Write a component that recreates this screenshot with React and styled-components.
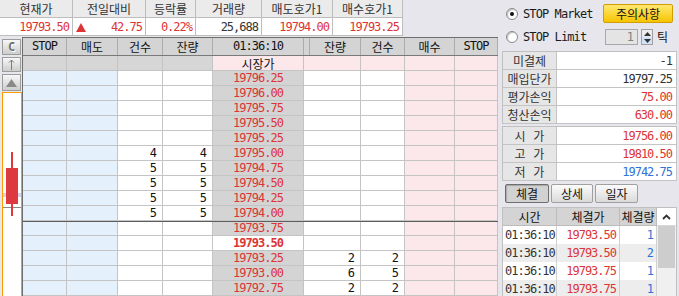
import React from "react";
import styled, { createGlobalStyle, css } from "styled-components";

const KR = `"Noto Sans CJK KR", "Noto Sans", sans-serif`;
const MONO = `"DejaVu Sans Mono", "Noto Sans CJK KR", monospace`;
const RED = "#dc3535";
const BLUE = "#2f72d8";
const DARK = "#333";

const GlobalStyle = createGlobalStyle`
  html, body { margin: 0; padding: 0; }
  body {
    background: #e6e6ec;
    font-family: ${KR};
    font-size: 12px;
    line-height: 14px;
    color: #222;
  }
  * { box-sizing: border-box; }
`;

const num = css`
  font-family: ${MONO};
  letter-spacing: -1px;
`;

// column widths of the order book (sum 475 + left border)
const COLS = "44px 51px 45px 50px 91px 6px 51px 44px 50px 43px";
const COL_BG = ["#e4f0fc", "#e4f0fc", "#fff", "#fff", "#d4d4d4", "#fff", "#fff", "#fff", "#fce8ea", "#fce8ea"];

const quoteHeads = ["현재가", "전일대비", "등락률", "거래량", "매도호가1", "매수호가1"];
const quoteValues = [
  { v: "19793.50", c: RED },
  { v: "42.75", c: RED, up: true },
  { v: "0.22%", c: RED },
  { v: "25,688", c: DARK },
  { v: "19794.00", c: RED },
  { v: "19793.25", c: RED },
];

const book = [
  { price: "시장가", market: true },
  { price: "19796.25" },
  { price: "19796.00" },
  { price: "19795.75" },
  { price: "19795.50" },
  { price: "19795.25" },
  { price: "19795.00", askCnt: 4, askQty: 4 },
  { price: "19794.75", askCnt: 5, askQty: 5 },
  { price: "19794.50", askCnt: 5, askQty: 5 },
  { price: "19794.25", askCnt: 5, askQty: 5 },
  { price: "19794.00", askCnt: 5, askQty: 5 },
  { price: "19793.75", divider: true },
  { price: "19793.50", current: true },
  { price: "19793.25", bidQty: 2, bidCnt: 2 },
  { price: "19793.00", bidQty: 6, bidCnt: 5 },
  { price: "19792.75", bidQty: 2, bidCnt: 2 },
];

const info1 = [
  { label: "미결제", value: "-1", color: DARK },
  { label: "매입단가", value: "19797.25", color: DARK },
  { label: "평가손익", value: "75.00", color: RED },
  { label: "청산손익", value: "630.00", color: RED },
];
const info2 = [
  { label: "시 가", value: "19756.00", color: RED },
  { label: "고 가", value: "19810.50", color: RED },
  { label: "저 가", value: "19742.75", color: BLUE },
];

const trades = [
  { time: "01:36:10", price: "19793.50", qty: "1" },
  { time: "01:36:10", price: "19793.50", qty: "2" },
  { time: "01:36:10", price: "19793.75", qty: "1" },
  { time: "01:36:10", price: "19793.75", qty: "1" },
];

const Screen = styled.div`
  display: flex;
  width: 679px;
  height: 296px;
  overflow: hidden;
  background: #e6e6ec;
`;

const Main = styled.div`
  width: 498px;
  display: flex;
  flex-direction: column;
`;

const QuoteGrid = styled.div`
  display: grid;
  grid-template-columns: 73px 73px 50px 66px 71px 70px;
  grid-template-rows: 18px 18px;
  width: 403px;
  margin-bottom: 1px;
  flex-shrink: 0;
`;

const QuoteHead = styled.div`
  display: flex;
  align-items: center;
  justify-content: center;
  background: #ebebeb;
  border-right: 1px solid #bdbdbd;
  border-bottom: 1px solid #bdbdbd;
  color: ${DARK};
`;

const QuoteValue = styled.div`
  display: flex;
  align-items: center;
  justify-content: flex-end;
  padding: 0 3px;
  background: #fff;
  border-right: 1px solid #bdbdbd;
  border-bottom: 1px solid #bdbdbd;
  color: ${(p) => p.$color};
  ${num}
`;

const UpMark = styled.span`
  margin-right: auto;
  width: 0;
  height: 0;
  border-left: 5.5px solid transparent;
  border-right: 5.5px solid transparent;
  border-bottom: 9px solid ${RED};
  margin-top: 1px;
`;

const BookArea = styled.div`
  flex: 1;
  display: flex;
  min-height: 0;
`;

const SideStrip = styled.div`
  width: 22px;
  display: flex;
  flex-direction: column;
  padding: 2px 0 0 2px;
`;

const StripButton = styled.div`
  width: 19px;
  height: ${(p) => p.$h}px;
  margin-bottom: ${(p) => p.$mb}px;
  flex-shrink: 0;
  display: flex;
  align-items: center;
  justify-content: center;
  background: linear-gradient(#f7f7f7, #cdcdcd);
  border: 1px solid #9c9c9c;
  color: #707070;
  font: bold 12px ${MONO};
  text-shadow: 1px 1px 0 #fff;
`;

const ChartBox = styled.div`
  flex: 1;
  width: 20px;
  position: relative;
  background: #fff;
  border: 1px solid #ff9c00;
  border-bottom: none;
`;

const CandleSvg = styled.svg`
  position: absolute;
  left: 0;
  top: 0;
`;

const Book = styled.div`
  width: 476px;
  display: flex;
  flex-direction: column;
  border-top: 1px solid #6e6e6e;
  border-left: 1px solid #6e6e6e;
`;

const BookRow = styled.div`
  display: grid;
  grid-template-columns: ${COLS};
  grid-template-rows: minmax(0, 1fr);
  flex-shrink: 0;
  overflow: hidden;
  height: ${(p) => (p.$head ? 18 : 15)}px;
  border-top: ${(p) => (p.$divider ? "1px solid #5e5e5e" : "none")};
  border-bottom: ${(p) => (p.$head ? "1px solid #7a7a7a" : "none")};
`;

const HeadCell = styled.div`
  display: flex;
  align-items: center;
  justify-content: center;
  line-height: 13px;
  background: #d4d4d4;
  border-right: 1px solid #acacac;
  color: #111;
  ${(p) => p.$num && num}
`;

const Cell = styled.div`
  display: flex;
  align-items: center;
  justify-content: ${(p) => (p.$center ? "center" : "flex-end")};
  padding-right: ${(p) => (p.$center ? 0 : 6)}px;
  line-height: 13px;
  background: ${(p) => p.$bg};
  border-right: 1px solid #c4c4c4;
  border-bottom: 1px solid #c4c4c4;
  color: ${(p) => p.$color || "#111"};
  font-weight: ${(p) => (p.$bold ? 700 : 400)};
  ${(p) => (p.$kr ? `font-family: ${KR};` : num)}
`;

const Panel = styled.div`
  flex: 1;
  display: flex;
  flex-direction: column;
  padding-left: 4px;
`;

const OptionRow = styled.div`
  display: flex;
  align-items: center;
  flex-shrink: 0;
  height: ${(p) => p.$h}px;
  margin-top: ${(p) => p.$mt}px;
  padding-left: 4px;
`;

const RadioOption = styled.label`
  display: flex;
  align-items: center;
  gap: 5px;
  width: ${(p) => p.$w}px;
  color: #1a1a1a;
  ${num}
  letter-spacing: -0.9px;
`;

const Radio = styled.span`
  width: 12px;
  height: 12px;
  border-radius: 50%;
  background: #fff;
  border: 1px solid #8a8a8a;
  box-shadow: inset 1px 1px 1px rgba(0, 0, 0, 0.25);
  display: flex;
  align-items: center;
  justify-content: center;
  &::after {
    content: "";
    width: 4px;
    height: 4px;
    border-radius: 50%;
    background: ${(p) => (p.$on ? "#111" : "transparent")};
  }
`;

const NoticeButton = styled.button`
  width: 70px;
  height: 19px;
  padding: 0;
  border: 1px solid #d49e00;
  border-radius: 2px;
  background: linear-gradient(#ffe870, #f6c400);
  font: 12px ${KR};
  color: #111;
  display: flex;
  align-items: center;
  justify-content: center;
`;

const SpinBox = styled.div`
  width: 33px;
  height: 16px;
  display: flex;
  align-items: center;
  justify-content: flex-end;
  padding-right: 4px;
  background: #e4e4e4;
  border: 1px solid #a8a8a8;
  color: #808080;
  ${num}
`;

const SpinButtons = styled.div`
  width: 12px;
  height: 16px;
  margin-left: 3px;
  display: flex;
  flex-direction: column;
  border: 1px solid #a0a0a0;
`;

const SpinHalf = styled.div`
  flex: 1;
  display: flex;
  align-items: center;
  justify-content: center;
  background: ${(p) => p.$bg};
`;

const Unit = styled.span`
  margin-left: 4px;
  font-size: 12px;
  color: #111;
`;

const InfoTable = styled.div`
  display: grid;
  grid-template-columns: 54px 1fr;
  grid-auto-rows: 18px;
  width: 175px;
  flex-shrink: 0;
  margin-top: ${(p) => p.$mt}px;
  border-top: 1px solid #c0c0c0;
  border-left: 1px solid #c0c0c0;
`;

const InfoLabel = styled.div`
  display: flex;
  align-items: center;
  justify-content: center;
  background: #e6e6e6;
  border-right: 1px solid #c4c4c4;
  border-bottom: 1px solid #c4c4c4;
  color: ${DARK};
  word-spacing: 5px;
`;

const InfoValue = styled.div`
  display: flex;
  align-items: center;
  justify-content: flex-end;
  padding-right: 4px;
  background: #fff;
  border-right: 1px solid #c4c4c4;
  border-bottom: 1px solid #c4c4c4;
  color: ${(p) => p.$color};
  ${num}
`;

const TabBar = styled.div`
  display: flex;
  gap: 2px;
  margin-top: 3px;
  padding-left: 3px;
  flex-shrink: 0;
`;

const Tab = styled.button`
  width: ${(p) => p.$w}px;
  height: 19px;
  padding: 0;
  font: 12px ${KR};
  color: #111;
  border-radius: 2px;
  border: 1px solid ${(p) => (p.$active ? "#6e6e6e" : "#a0a0a0")};
  background: ${(p) => (p.$active ? "#d2d2d2" : "linear-gradient(#fbfbfb, #dadada)")};
  box-shadow: ${(p) => (p.$active ? "inset 1px 1px 1px rgba(0,0,0,0.2)" : "none")};
  display: flex;
  align-items: center;
  justify-content: center;
`;

const TradeBox = styled.div`
  display: flex;
  width: 175px;
  margin-top: 4px;
  flex: 1;
  min-height: 0;
  border-left: 1px solid #c0c0c0;
  border-top: 1px solid #c0c0c0;
`;

const TradeGrid = styled.div`
  display: grid;
  grid-template-columns: 54px 63px 37px;
  grid-auto-rows: 18px;
  width: 154px;
  align-content: start;
`;

const TradeHead = styled.div`
  display: flex;
  align-items: center;
  justify-content: center;
  background: #d4d4d4;
  border-right: 1px solid #bcbcbc;
  border-bottom: 1px solid #bcbcbc;
  color: #111;
`;

const TradeCell = styled.div`
  display: flex;
  align-items: center;
  justify-content: ${(p) => (p.$left ? "flex-start" : "flex-end")};
  padding: 0 ${(p) => (p.$left ? 0 : 3)}px 0 ${(p) => (p.$left ? 2 : 0)}px;
  background: ${(p) => (p.$odd ? "#ededed" : "#fff")};
  border-right: 1px solid #d0d0d0;
  color: ${(p) => p.$color};
  ${num}
`;

const ScrollBar = styled.div`
  width: 20px;
  display: flex;
  flex-direction: column;
  background: #f0f0f0;
  border-right: 1px solid #c0c0c0;
`;

const ScrollUp = styled.div`
  height: 18px;
  display: flex;
  align-items: center;
  justify-content: center;
  background: #fff;
  border-bottom: 1px solid #d8d8d8;
`;

const ScrollThumb = styled.div`
  height: 42px;
  margin: 0 1px;
  background: #cdcdcd;
`;

function Candle() {
  return (
    <CandleSvg width="18" height="210" viewBox="0 0 18 210">
      <rect x="0" y="100" width="18" height="4" fill="#d8d2ea" />
      <rect x="0" y="114" width="18" height="1" fill="#8a8a8a" />
      <rect x="8" y="59" width="2" height="64" fill="#dc3a3e" />
      <rect x="3" y="75" width="12" height="36" fill="#dc3a3e" />
    </CandleSvg>
  );
}

function OrderBook() {
  const heads = ["STOP", "매도", "건수", "잔량", "01:36:10", "", "잔량", "건수", "매수", "STOP"];
  return (
    <Book>
      <BookRow $head>
        {heads.map((h, i) => (
          <HeadCell key={i} $num={/^[0-9A-Z:]+$/.test(h)}>
            {h}
          </HeadCell>
        ))}
      </BookRow>
      {book.map((r, i) => {
        const bg = (c) => {
          if (r.market) return c < 4 ? "#d6d6d6" : "#fce8ea";
          if (r.current && c === 4) return "#fff";
          return COL_BG[c];
        };
        return (
          <BookRow key={i} $divider={r.divider}>
            <Cell $bg={bg(0)} />
            <Cell $bg={bg(1)} />
            <Cell $bg={bg(2)}>{r.askCnt}</Cell>
            <Cell $bg={bg(3)}>{r.askQty}</Cell>
            <Cell
              $bg={bg(4)}
              $center
              $kr={r.market}
              $bold={r.current}
              $color={r.market ? "#111" : RED}
            >
              {r.price}
            </Cell>
            <Cell $bg={bg(5)} />
            <Cell $bg={bg(6)}>{r.bidQty}</Cell>
            <Cell $bg={bg(7)}>{r.bidCnt}</Cell>
            <Cell $bg={bg(8)} />
            <Cell $bg={bg(9)} />
          </BookRow>
        );
      })}
    </Book>
  );
}

export default function App() {
  return (
    <>
      <GlobalStyle />
      <Screen>
        <Main>
          <QuoteGrid>
            {quoteHeads.map((h) => (
              <QuoteHead key={h}>{h}</QuoteHead>
            ))}
            {quoteValues.map((q, i) => (
              <QuoteValue key={i} $color={q.c}>
                {q.up && <UpMark />}
                {q.v}
              </QuoteValue>
            ))}
          </QuoteGrid>
          <BookArea>
            <SideStrip>
              <StripButton $h={16} $mb={2}>C</StripButton>
              <StripButton $h={15} $mb={2}>
                <svg width="7" height="11" viewBox="0 0 7 11">
                  <path d="M3.5 1V11M1 3.5L3.5 1L6 3.5" stroke="#7a7a7a" fill="none" />
                </svg>
              </StripButton>
              <StripButton $h={17} $mb={1}>
                <svg width="11" height="8" viewBox="0 0 11 8">
                  <path d="M5.5 0L11 8H0Z" fill="#8a8a8a" />
                </svg>
              </StripButton>
              <ChartBox>
                <Candle />
              </ChartBox>
            </SideStrip>
            <OrderBook />
          </BookArea>
        </Main>

        <Panel>
          <OptionRow $h={19} $mt={4}>
            <RadioOption $w={97}>
              <Radio $on />
              STOP Market
            </RadioOption>
            <NoticeButton>주의사항</NoticeButton>
          </OptionRow>
          <OptionRow $h={16} $mt={6}>
            <RadioOption $w={99}>
              <Radio />
              STOP Limit
            </RadioOption>
            <SpinBox>1</SpinBox>
            <SpinButtons>
              <SpinHalf $bg="#ececec">
                <svg width="7" height="4" viewBox="0 0 7 4">
                  <path d="M3.5 0L7 4H0Z" fill="#333" />
                </svg>
              </SpinHalf>
              <SpinHalf $bg="#cfe2f6">
                <svg width="7" height="4" viewBox="0 0 7 4">
                  <path d="M0 0H7L3.5 4Z" fill="#333" />
                </svg>
              </SpinHalf>
            </SpinButtons>
            <Unit>틱</Unit>
          </OptionRow>

          <InfoTable $mt={6}>
            {info1.map((r) => (
              <React.Fragment key={r.label}>
                <InfoLabel>{r.label}</InfoLabel>
                <InfoValue $color={r.color}>{r.value}</InfoValue>
              </React.Fragment>
            ))}
          </InfoTable>
          <InfoTable $mt={2}>
            {info2.map((r) => (
              <React.Fragment key={r.label}>
                <InfoLabel>{r.label}</InfoLabel>
                <InfoValue $color={r.color}>{r.value}</InfoValue>
              </React.Fragment>
            ))}
          </InfoTable>

          <TabBar>
            <Tab $w={44} $active>체결</Tab>
            <Tab $w={42}>상세</Tab>
            <Tab $w={43}>일자</Tab>
          </TabBar>

          <TradeBox>
            <TradeGrid>
              <TradeHead>시간</TradeHead>
              <TradeHead>체결가</TradeHead>
              <TradeHead>체결량</TradeHead>
              {trades.map((t, i) => (
                <React.Fragment key={i}>
                  <TradeCell $left $odd={i % 2 === 1} $color={DARK}>{t.time}</TradeCell>
                  <TradeCell $odd={i % 2 === 1} $color={RED}>{t.price}</TradeCell>
                  <TradeCell $odd={i % 2 === 1} $color={BLUE}>{t.qty}</TradeCell>
                </React.Fragment>
              ))}
            </TradeGrid>
            <ScrollBar>
              <ScrollUp>
                <svg width="9" height="6" viewBox="0 0 9 6">
                  <path d="M1 5L4.5 1.5L8 5" stroke="#333" strokeWidth="1.8" fill="none" />
                </svg>
              </ScrollUp>
              <ScrollThumb />
            </ScrollBar>
          </TradeBox>
        </Panel>
      </Screen>
    </>
  );
}
